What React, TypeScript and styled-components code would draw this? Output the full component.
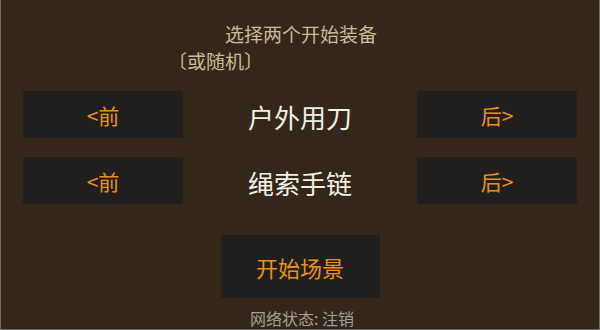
import React from "react";
import styled, { createGlobalStyle } from "styled-components";

const Global = createGlobalStyle`
  html, body { margin: 0; padding: 0; background: #34271a; }
  body { font-family: "Noto Sans CJK SC", "Noto Sans", sans-serif; }
`;

const Screen = styled.div`
  width: 600px;
  height: 330px;
  box-sizing: border-box;
  background: #34271a;
  border-left: 1px solid #6f6a66;
  border-right: 1px solid #6f6a66;
  border-bottom: 1px solid #6f6a66;
  display: flex;
  flex-direction: column;
  align-items: stretch;
  overflow: hidden;
`;

const Title = styled.div`
  margin-top: 22px;
  text-align: center;
  font-size: 19px;
  line-height: 24px;
  color: #cbbb98;
  padding-left: 2px;
`;

const Subtitle = styled.div`
  margin-top: 3px;
  padding-left: 167px;
  font-size: 19px;
  line-height: 24px;
  color: #cbbb98;
`;

const Rows = styled.div`
  margin-top: 18px;
  padding: 0 22px 0 22px;
  display: flex;
  flex-direction: column;
  gap: 19px;
`;

const Row = styled.div`
  display: grid;
  grid-template-columns: 160px 1fr 160px;
  align-items: center;
  height: 47px;
`;

const NavButton = styled.div`
  height: 47px;
  background: #211f1e;
  color: #e89214;
  font-size: 21px;
  display: flex;
  align-items: center;
  justify-content: center;
`;

const Label = styled.div`
  text-align: center;
  color: #f2efe6;
  font-size: 26px;
  padding-top: 4px;
`;

const StartWrap = styled.div`
  margin-top: 31px;
  display: flex;
  justify-content: center;
`;

const StartButton = styled.div`
  width: 159px;
  height: 63px;
  background: #211f1e;
  color: #e89214;
  font-size: 22px;
  display: flex;
  align-items: center;
  justify-content: center;
`;

const Status = styled.div`
  margin-top: 10px;
  text-align: center;
  font-size: 16px;
  line-height: 20px;
  color: #a59e97;
  padding-left: 4px;
`;

const items = ["户外用刀", "绳索手链"];

export default function App() {
  return (
    <>
      <Global />
      <Screen>
        <Title>选择两个开始装备</Title>
        <Subtitle>〔或随机〕</Subtitle>
        <Rows>
          {items.map((it) => (
            <Row key={it}>
              <NavButton>&lt;前</NavButton>
              <Label>{it}</Label>
              <NavButton>后&gt;</NavButton>
            </Row>
          ))}
        </Rows>
        <StartWrap>
          <StartButton>开始场景</StartButton>
        </StartWrap>
        <Status>网络状态: 注销</Status>
      </Screen>
    </>
  );
}
